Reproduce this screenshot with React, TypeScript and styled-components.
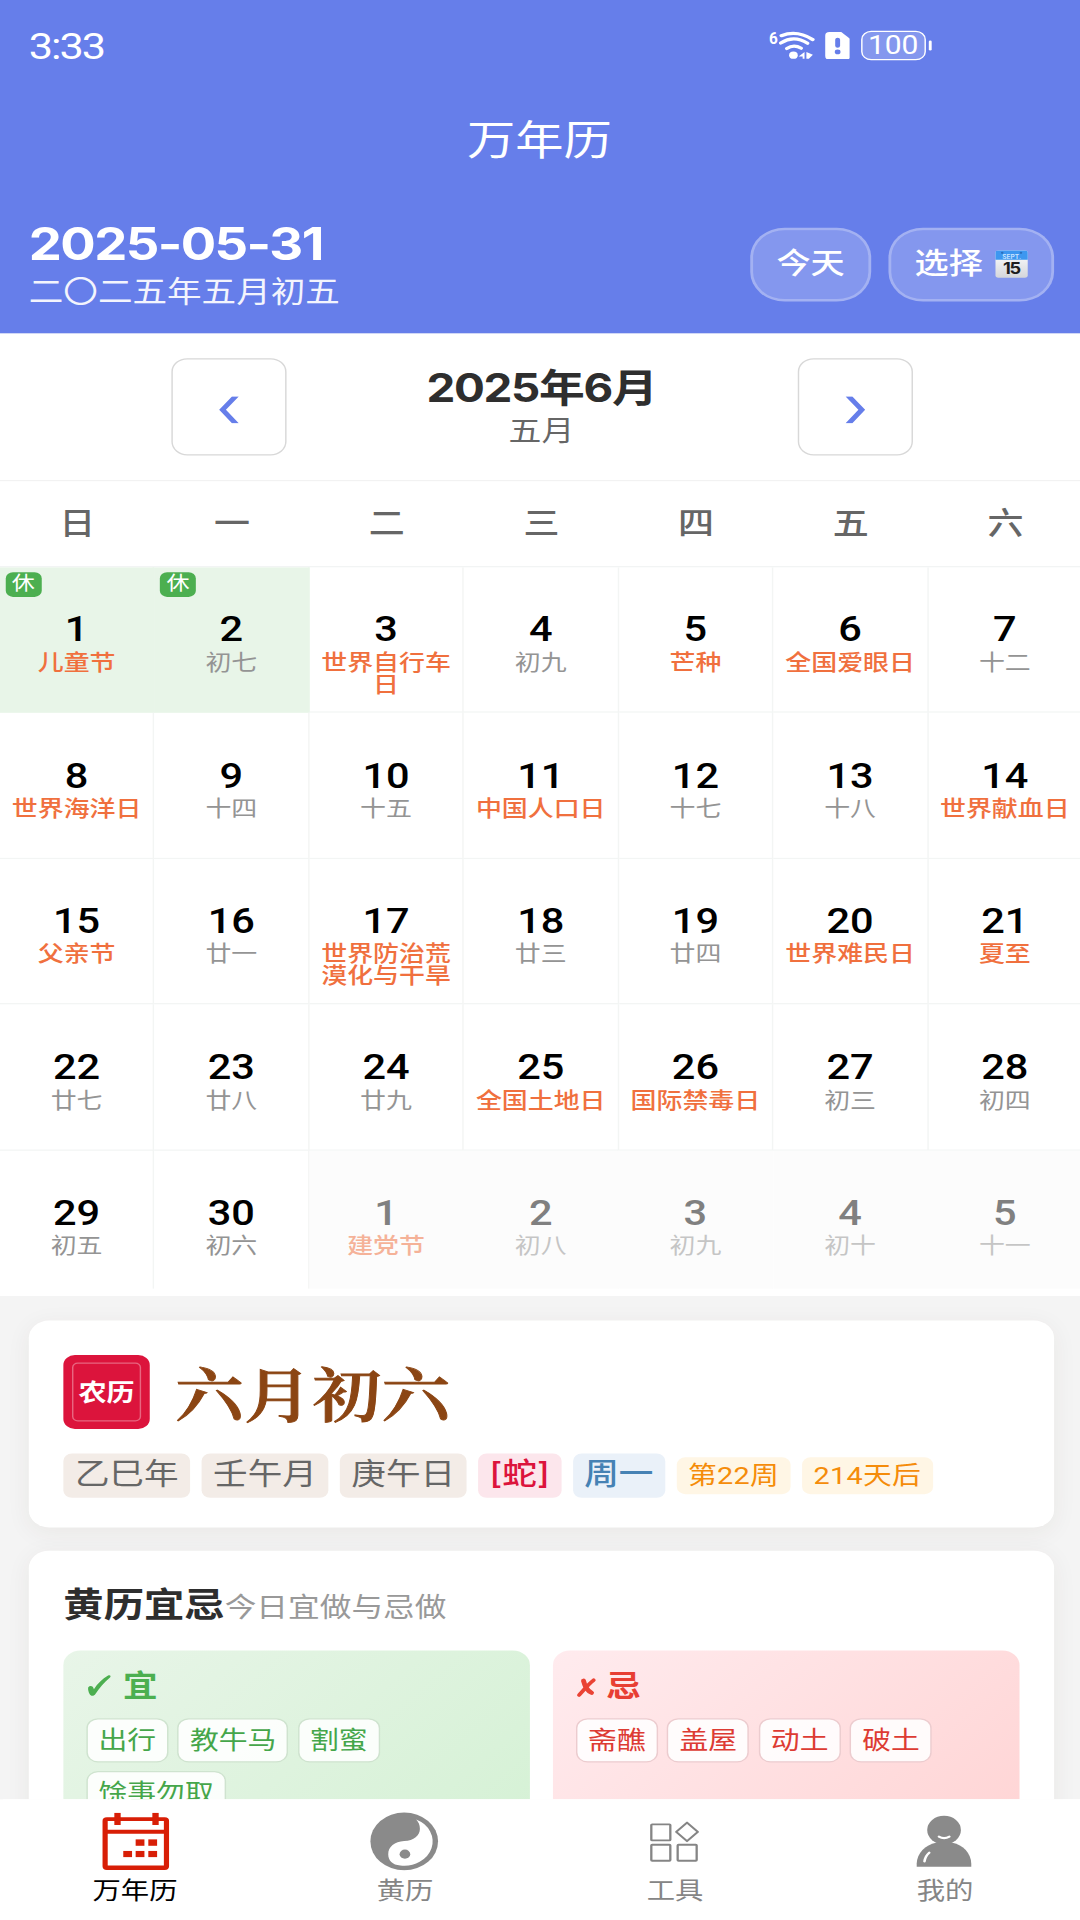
import React from "react";
import styled, { createGlobalStyle, css } from "styled-components";

const Global = createGlobalStyle`
  * { box-sizing: border-box; }
  html, body { margin: 0; padding: 0; overflow: hidden; background: #f4f4f4; }
`;

const sans = `Inter, "Noto Sans CJK SC", sans-serif`;
const digits = `Roboto, "Noto Sans CJK SC", sans-serif`;

/* The layout uses a 750-unit-wide design grid, scaled up to the device. */
const Viewport = styled.div`
  width: 1080px;
  height: 1920px;
  overflow: hidden;
`;

const Screen = styled.div`
  width: 752px;
  height: 1560px;
  transform: scale(1.44, 1.230769);
  transform-origin: 0 0;
  display: flex;
  flex-direction: column;
  background: #f4f4f4;
  font-family: ${sans};
  color: #000;
`;

const Header = styled.header`
  flex: none;
  height: 271px;
  background: #667eea;
  color: #fff;
  display: flex;
  flex-direction: column;
`;

const StatusBar = styled.div`
  height: 74px;
  padding: 0 105px 0 20px;
  display: flex;
  align-items: center;
`;

const Clock = styled.span`
  flex: 1;
  font-family: ${digits};
  font-size: 30px;
  line-height: 30px;
  letter-spacing: -1.4px;
  font-weight: 400;
  margin-top: 1px;
`;

const StatusIcons = styled.div`
  display: flex;
  align-items: center;
`;

const WifiGroup = styled.div`
  display: flex;
  align-items: flex-start;
  margin-right: 6px;
`;

const WifiGen = styled.span`
  font-family: Roboto, sans-serif;
  font-size: 14px;
  line-height: 14px;
  font-weight: 700;
  width: 6px;
  transform: scaleX(0.76);
  transform-origin: 0 0;
  margin-top: -1.5px;
`;

const Battery = styled.div`
  width: 44.5px;
  height: 24.5px;
  margin-left: 8px;
  border: 1.5px solid #fff;
  border-radius: 7px;
  background: rgba(255, 255, 255, 0.2);
  display: flex;
  align-items: center;
  justify-content: center;
  font-family: ${digits};
  font-size: 20.8px;
  line-height: 20px;
  font-weight: 400;
`;

const BatteryTip = styled.i`
  width: 2.5px;
  height: 7.5px;
  margin-left: 2px;
  border-radius: 1px;
  background: #fff;
`;

const Title = styled.h1`
  margin: 0;
  width: 749px;
  height: 80px;
  text-align: center;
  font-size: 33.5px;
  line-height: 81px;
  font-weight: 400;
`;

const DateBar = styled.div`
  flex: 1;
  padding: 31px 20px 0;
  display: flex;
  justify-content: space-between;
  align-items: flex-start;
`;

const DateBlock = styled.div`
  display: flex;
  flex-direction: column;
`;

const SolarDate = styled.strong`
  font-size: 36.5px;
  line-height: 27px;
  font-weight: 700;
  letter-spacing: -1.1px;
`;

const LunarDate = styled.span`
  font-size: 24px;
  line-height: 28px;
  margin-top: 10.5px;
  opacity: 0.92;
`;

const Actions = styled.div`
  display: flex;
  gap: 11.5px;
`;

const Pill = styled.button`
  height: 60px;
  padding: 0 16.5px 1px;
  border: 2px solid rgba(255, 255, 255, 0.4);
  border-radius: 24px;
  background: rgba(255, 255, 255, 0.2);
  background-clip: padding-box;
  color: #fff;
  font: 500 23.7px/30px ${sans};
  display: flex;
  align-items: center;
  gap: 8px;
`;

const MonthBar = styled.div`
  flex: none;
  height: 120px;
  border-bottom: 1px solid #f2f2f2;
  background: #fff;
  display: flex;
  justify-content: center;
  align-items: center;
`;

const Arrow = styled.button`
  width: 80px;
  height: 79px;
  padding: 5px 0 0;
  border: 1px solid #d8d8d8;
  border-radius: 11px;
  background: #fff;
  display: flex;
  align-items: center;
  justify-content: center;
`;

const MonthLabel = styled.div`
  width: 355px;
  display: flex;
  flex-direction: column;
  align-items: center;
`;

const MonthMain = styled.strong`
  font-size: 31.8px;
  line-height: 37px;
  font-weight: 700;
  letter-spacing: -0.9px;
  color: #2e2e2e;
`;

const MonthSub = styled.span`
  font-size: 22.8px;
  line-height: 30px;
  margin-top: 1px;
  color: #666;
`;

const Week = styled.div`
  flex: none;
  height: 69.5px;
  background: #fff;
  border-bottom: 1px solid #f0f3f2;
  display: grid;
  grid-template-columns: repeat(7, 1fr);
  justify-items: center;
  font-size: 25px;
  line-height: 68px;
  font-weight: 500;
  color: #666;
`;

const Days = styled.div`
  flex: none;
  height: 592.5px;
  background: #fff;
  display: grid;
  grid-template-columns: repeat(7, 1fr);
  grid-template-rows: repeat(5, 118.5px);
`;

const Day = styled.div<{ $rest?: boolean; $out?: boolean; $last?: boolean }>`
  position: relative;
  padding: 35.5px 4px 0;
  border-right: 1px solid #f3f5f4;
  border-bottom: 1px solid #f3f5f4;
  display: flex;
  flex-direction: column;
  align-items: center;
  ${(p) => p.$rest && css`background: #e8f5e8; border-color: #e8f5e8;`}
  ${(p) => p.$last && css`height: 112.5px; border-bottom: 0;`}
  ${(p) => p.$out && css`background: #fcfcfc; border-color: #fcfcfc;`}
`;

const DayNumber = styled.span<{ $out?: boolean }>`
  font-family: ${digits};
  font-size: 28.8px;
  line-height: 30px;
  font-weight: 500;
  color: ${(p) => (p.$out ? "#808080" : "#000")};
`;

const DayNote = styled.span<{ $fest?: boolean; $out?: boolean }>`
  margin-top: 3px;
  max-width: 92px;
  text-align: center;
  font-size: 18px;
  line-height: 18px;
  font-weight: ${(p) => (p.$fest ? 500 : 400)};
  color: ${(p) => (p.$fest ? "#f0703e" : "#949494")};
  opacity: ${(p) => (p.$out ? 0.52 : 1)};
`;

const RestBadge = styled.span`
  position: absolute;
  left: 4px;
  top: 4px;
  width: 24.5px;
  height: 20px;
  border-radius: 5px;
  background: #4caf50;
  color: #fff;
  font-size: 16px;
  line-height: 17px;
  text-align: center;
`;

const Feed = styled.main`
  flex: 1;
  min-height: 0;
  overflow: hidden;
  padding: 20px 20px 0;
  display: flex;
  flex-direction: column;
  gap: 19.5px;
`;

const Card = styled.section<{ $h: number }>`
  flex: none;
  height: ${(p) => p.$h}px;
  border-radius: 14px;
  background: #fff;
  box-shadow: 0 4px 18px rgba(70, 50, 20, 0.06);
  padding: 28px 24px;
`;

const LunarRow = styled.div`
  display: flex;
  align-items: center;
  gap: 17.5px;
`;

const Seal = styled.div`
  width: 60px;
  height: 60px;
  padding: 6px;
  border-radius: 8px;
  background: #dc143c;
`;

const SealInner = styled.div`
  height: 48px;
  border: 1px solid rgba(255, 255, 255, 0.35);
  border-radius: 4px;
  text-align: center;
  color: #fff;
  font-size: 19.5px;
  font-weight: 700;
  line-height: 46px;
`;

const LunarDay = styled.strong`
  font-family: "Noto Serif CJK SC", "Noto Serif SC", "Liberation Serif", "Noto Sans CJK SC", serif;
  font-size: 47.8px;
  line-height: 60px;
  font-weight: 600;
  -webkit-text-stroke: 0.7px #8b4513;
  color: #8b4513;
`;

const Tags = styled.div`
  margin-top: 20px;
  display: flex;
  align-items: center;
  gap: 8px;
`;

const Tag = styled.span<{ $bg: string; $fg: string; $small?: boolean; $strong?: boolean }>`
  padding: 0 8px;
  border-radius: 6px;
  white-space: nowrap;
  background: ${(p) => p.$bg};
  color: ${(p) => p.$fg};
  font-family: ${(p) => (p.$small ? digits : sans)};
  font-size: ${(p) => (p.$small ? 20 : 24)}px;
  line-height: ${(p) => (p.$small ? 30 : 34)}px;
  padding-bottom: ${(p) => (p.$small ? 0 : 2)}px;
  font-weight: ${(p) => (p.$strong ? 500 : 400)};
  letter-spacing: ${(p) => (p.$small ? "0.2px" : "0")};
`;

const CardHead = styled.div`
  display: flex;
  align-items: baseline;
  height: 53px;
`;

const CardTitle = styled.strong`
  font-size: 28px;
  line-height: 28px;
  font-weight: 700;
  color: #2e2e2e;
`;

const CardHint = styled.span`
  font-size: 22px;
  color: #999;
`;

const Panels = styled.div`
  display: grid;
  grid-template-columns: 1fr 1fr;
  gap: 16px;
`;

const Panel = styled.div<{ $tone: "good" | "bad" }>`
  height: 180px;
  padding: 16px;
  border-radius: 12px;
  color: ${(p) => (p.$tone === "good" ? "#4caf50" : "#e83e33")};
  background: ${(p) =>
    p.$tone === "good"
      ? "linear-gradient(135deg, #e8f5e8, #d4f1d4)"
      : "linear-gradient(135deg, #ffebee, #ffd3d3)"};
`;

const PanelHead = styled.div`
  height: 39px;
  display: flex;
  font-size: 24px;
  line-height: 25px;
  font-weight: 700;
`;

const Chips = styled.div`
  display: flex;
  flex-wrap: wrap;
  gap: 6.7px;
`;

const Chip = styled.span<{ $tone: "good" | "bad" }>`
  height: 36px;
  padding: 0 7.4px;
  border: 1px solid ${(p) => (p.$tone === "good" ? "#cfe3cf" : "#eccccf")};
  border-radius: 8px;
  background: rgba(255, 255, 255, 0.88);
  font-size: 20px;
  line-height: 34px;
  color: ${(p) => (p.$tone === "good" ? "#45a64a" : "#dd3b33")};
`;

const TabBar = styled.nav`
  flex: none;
  width: 750px;
  height: 98.5px;
  background: #fff;
  box-shadow: 2px 0 0 #fff;
  display: grid;
  grid-template-columns: repeat(4, 1fr);
`;

const Tab = styled.div<{ $active?: boolean }>`
  padding-top: 10.5px;
  display: flex;
  flex-direction: column;
  align-items: center;
  font-size: 19.7px;
  line-height: 33px;
  color: ${(p) => (p.$active ? "#000" : "#858585")};
`;

const Wifi = () => (
  <svg width="27" height="24" viewBox="0 0 27 24" fill="none" stroke="#fff" strokeWidth="2.6" strokeLinecap="round">
    <path d="M2.6 4Q13.5 -1 24.4 7.2" />
    <path d="M2.2 9.9Q11.4 3.2 20.8 10.2" />
    <path d="M6.4 14.4Q11.2 10.8 16.4 14.2" />
    <circle cx="11" cy="19.8" r="3" fill="#fff" stroke="none" />
    <path d="M18.7 17.2v5.6h-1.3v-1.8h-2.8zM20 17.2l4.5 2.2-2.8 3.4h-1.7z" fill="#fff" stroke="none" />
  </svg>
);

const Sim = () => (
  <svg width="17.5" height="22.5" viewBox="0 0 17.5 22.5">
    <path d="M3 0H11.2L17.5 5.6V19.5A3 3 0 0 1 14.5 22.5H3A3 3 0 0 1 0 19.5V3A3 3 0 0 1 3 0Z" fill="#fff" />
    <rect x="7" y="4.6" width="3.4" height="8.2" rx="1.7" fill="#667eea" />
    <ellipse cx="8.7" cy="16.2" rx="2" ry="1.9" fill="#667eea" />
  </svg>
);

const DateEmoji = () => (
  <svg width="23" height="23" viewBox="0 0 23 23">
    <defs>
      <linearGradient id="sheet" x1="0" y1="0" x2="0" y2="1">
        <stop offset="0" stopColor="#fff" />
        <stop offset="1" stopColor="#d4d6db" />
      </linearGradient>
    </defs>
    <rect x="0.3" y="0.5" width="22.4" height="22.2" rx="2" fill="url(#sheet)" />
    <path d="M2 0.5H21A1.7 1.7 0 0 1 22.7 2.2V8H0.3V2.2A1.7 1.7 0 0 1 2 0.5Z" fill="#3d97f0" />
    <circle cx="5" cy="2.4" r="0.9" fill="#2a6fbe" />
    <circle cx="18" cy="2.4" r="0.9" fill="#2a6fbe" />
    <text x="11.5" y="7.2" textAnchor="middle" fontFamily="Inter, sans-serif" fontSize="4.6" fontWeight="600" fill="#cfe6ff">SEPT.</text>
    <text x="11.3" y="19.4" textAnchor="middle" fontFamily="Inter, sans-serif" fontSize="12.6" fontWeight="700" letterSpacing="-0.9" fill="#1d1d1f">15</text>
  </svg>
);

const Chevron = ({ flip }: { flip?: boolean }) => (
  <svg width="14" height="22" viewBox="0 0 14 22">
    <path d={flip ? "M0.2 0.2H4.9L13.8 11L4.9 21.8H0.2L9.1 11Z" : "M13.8 0.2H9.1L0.2 11L9.1 21.8H13.8L4.9 11Z"} fill="#667eea" />
  </svg>
);

const Tick = () => (
  <svg width="25.5" height="24" viewBox="0 0 25.5 24">
    <path d="M1.2 14C2.6 12 4.8 12.8 5.2 15.6C7.8 10.8 11.2 7 14.8 4.6C16.4 3.6 17.4 4.8 16.4 6C12.4 10 9 14.6 6.4 19.2C5.2 21.4 3 21.4 2.2 19.4C1.5 17.6 1 15.8 1.2 14Z" fill="#4caf50" />
  </svg>
);

const Cross = () => (
  <svg width="21" height="24" viewBox="0 0 21 24" fill="none" stroke="#ea4335" strokeLinecap="round">
    <path d="M2.2 20.2C5 16.6 8.6 11.4 12.2 8.2" strokeWidth="2.9" />
    <path d="M5.2 8.6C6 12.4 7.6 16.6 10.8 18.4" strokeWidth="3.4" />
  </svg>
);

const CalendarIcon = () => (
  <svg width="48" height="48" viewBox="0 0 48 48" fill="#d81e06">
    <path fillRule="evenodd" d="M4.2 4.5H44.4A3 3 0 0 1 47.4 7.5V44.3A3 3 0 0 1 44.4 47.3H4.2A3 3 0 0 1 1.2 44.3V7.5A3 3 0 0 1 4.2 4.5ZM4.8 7.6V14.6H43.8V7.6ZM4.8 17.9V43.8H43.8V17.9Z" />
    <rect x="9.4" y="1" width="4.4" height="9.8" />
    <rect x="35.8" y="1" width="4.4" height="9.8" />
    <rect x="24.2" y="22.5" width="6.1" height="5.2" />
    <rect x="33" y="22.5" width="6.1" height="5.2" />
    <rect x="15.6" y="31.9" width="6.1" height="5" />
    <rect x="24.2" y="31.9" width="6.1" height="5" />
    <rect x="33" y="31.9" width="6.1" height="5" />
  </svg>
);

const YinYang = () => (
  <svg width="48" height="48" viewBox="0 0 48 48">
    <circle cx="23.7" cy="24.1" r="23.5" fill="#8a8a8a" />
    <path d="M32 6.3A19.7 19.7 0 0 1 21 43.7C15.5 43.4 12.6 39.6 12.6 34.6C12.6 28.6 17 24.3 23.7 23.9C30.4 23.5 34.6 19.4 34.6 13.8C34.6 10.8 33.6 8.2 32 6.3Z" fill="#fff" />
    <circle cx="24.2" cy="34.5" r="3.7" fill="#8a8a8a" />
  </svg>
);

const ToolsIcon = () => (
  <svg width="48" height="48" viewBox="0 0 48 48" fill="none" stroke="#858585" strokeWidth="1.6" strokeLinejoin="round">
    <rect x="7.3" y="10.3" width="13.2" height="13" rx="0.6" />
    <rect x="7.3" y="26.8" width="13.2" height="13" rx="0.6" />
    <rect x="25.6" y="26.8" width="13.2" height="13" rx="0.6" />
    <path d="M32.1 8.9L39.6 16.4L32.1 23.9L24.6 16.4Z" />
  </svg>
);

const PersonIcon = () => (
  <svg width="48" height="48" viewBox="0 0 48 48" fill="#8a8a8a">
    <ellipse cx="23.6" cy="14.9" rx="11.7" ry="11.6" />
    <path d="M4.6 44.7V42C4.8 33.6 10.6 27 18 25.2H29.4C36.8 27 42.3 33.6 42.5 42V44.7Z" />
    <path d="M20 20.2Q23.6 22.8 27.3 20.2" fill="none" stroke="#fff" strokeWidth="1.7" strokeLinecap="round" />
    <path d="M13.3 33.4Q10.6 36 10 40.4" fill="none" stroke="#fff" strokeWidth="1.8" strokeLinecap="round" />
  </svg>
);

interface DayData {
  n: number;
  note: string;
  fest?: boolean;
  rest?: boolean;
  out?: boolean;
}

const raw =
  "1*儿童节 2初七 3*世界自行车日 4初九 5*芒种 6*全国爱眼日 7十二 " +
  "8*世界海洋日 9十四 10十五 11*中国人口日 12十七 13十八 14*世界献血日 " +
  "15*父亲节 16廿一 17*世界防治荒漠化与干旱 18廿三 19廿四 20*世界难民日 21*夏至 " +
  "22廿七 23廿八 24廿九 25*全国土地日 26*国际禁毒日 27初三 28初四 " +
  "29初五 30初六 1*建党节 2初八 3初九 4初十 5十一";

const days: DayData[] = raw.split(" ").map((item, i) => {
  const [, n, star, note] = item.match(/^(\d+)(\*?)(.+)$/)!;
  return { n: Number(n), note, fest: star === "*", rest: i < 2, out: i > 29 };
});

const tabs = [
  { label: "万年历", icon: <CalendarIcon />, active: true },
  { label: "黄历", icon: <YinYang /> },
  { label: "工具", icon: <ToolsIcon /> },
  { label: "我的", icon: <PersonIcon /> },
];

export default function App() {
  return (
    <Viewport>
      <Global />
      <Screen>
        <Header>
          <StatusBar>
            <Clock>3:33</Clock>
            <StatusIcons>
              <WifiGroup>
                <WifiGen>6</WifiGen>
                <Wifi />
              </WifiGroup>
              <Sim />
              <Battery>100</Battery>
              <BatteryTip />
            </StatusIcons>
          </StatusBar>
          <Title>万年历</Title>
          <DateBar>
            <DateBlock>
              <SolarDate>2025-05-31</SolarDate>
              <LunarDate>二〇二五年五月初五</LunarDate>
            </DateBlock>
            <Actions>
              <Pill>今天</Pill>
              <Pill>
                选择
                <DateEmoji />
              </Pill>
            </Actions>
          </DateBar>
        </Header>

        <MonthBar>
          <Arrow><Chevron /></Arrow>
          <MonthLabel>
            <MonthMain>2025年6月</MonthMain>
            <MonthSub>五月</MonthSub>
          </MonthLabel>
          <Arrow><Chevron flip /></Arrow>
        </MonthBar>

        <Week>
          {[..."日一二三四五六"].map((d) => <span key={d}>{d}</span>)}
        </Week>

        <Days>
          {days.map((d, i) => (
            <Day key={i} $rest={d.rest} $out={d.out} $last={i > 27}>
              {d.rest && <RestBadge>休</RestBadge>}
              <DayNumber $out={d.out}>{d.n}</DayNumber>
              <DayNote $fest={d.fest} $out={d.out}>{d.note}</DayNote>
            </Day>
          ))}
        </Days>

        <Feed>
          <Card $h={167.5}>
            <LunarRow>
              <Seal><SealInner>农历</SealInner></Seal>
              <LunarDay>六月初六</LunarDay>
            </LunarRow>
            <Tags>
              <Tag $bg="#f3ece7" $fg="#666">乙巳年</Tag>
              <Tag $bg="#f3ece7" $fg="#666">壬午月</Tag>
              <Tag $bg="#f3ece7" $fg="#666">庚午日</Tag>
              <Tag $bg="#fce6ec" $fg="#dc143c" $strong>[蛇]</Tag>
              <Tag $bg="#eaf1f9" $fg="#4682b4" $strong>周一</Tag>
              <Tag $bg="#fff6e5" $fg="#f58c0a" $small>第22周</Tag>
              <Tag $bg="#fff6e5" $fg="#f58c0a" $small>214天后</Tag>
            </Tags>
          </Card>

          <Card $h={300}>
            <CardHead>
              <CardTitle>黄历宜忌</CardTitle>
              <CardHint>今日宜做与忌做</CardHint>
            </CardHead>
            <Panels>
              <Panel $tone="good">
                <PanelHead><Tick />宜</PanelHead>
                <Chips>
                  {["出行", "教牛马", "割蜜", "馀事勿取"].map((t) => <Chip key={t} $tone="good">{t}</Chip>)}
                </Chips>
              </Panel>
              <Panel $tone="bad">
                <PanelHead><Cross />忌</PanelHead>
                <Chips>
                  {["斋醮", "盖屋", "动土", "破土"].map((t) => <Chip key={t} $tone="bad">{t}</Chip>)}
                </Chips>
              </Panel>
            </Panels>
          </Card>
        </Feed>

        <TabBar>
          {tabs.map((t) => (
            <Tab key={t.label} $active={t.active}>
              {t.icon}
              <span>{t.label}</span>
            </Tab>
          ))}
        </TabBar>
      </Screen>
    </Viewport>
  );
}
